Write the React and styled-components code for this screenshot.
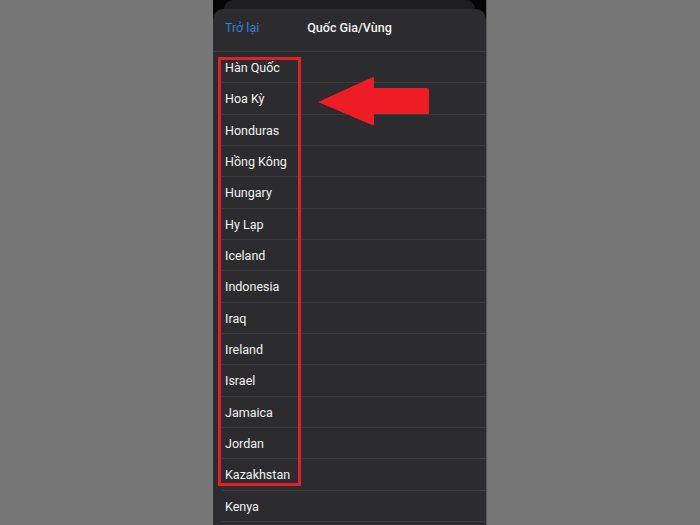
import React from "react";
import styled, { createGlobalStyle } from "styled-components";

const Global = createGlobalStyle`
  html, body { margin: 0; padding: 0; background: #777777; }
  body { font-family: Roboto, "Liberation Sans", Arial, sans-serif; }
`;

const Page = styled.div`
  width: 700px;
  height: 525px;
  display: flex;
  justify-content: center;
  background: #777777;
  overflow: hidden;
`;

const Phone = styled.div`
  position: relative;
  width: 273px;
  height: 525px;
  background: #050505;
  display: flex;
  flex-direction: column;
  overflow: hidden;
  border-right: 1px solid #555;
`;

const BehindCard = styled.div`
  height: 9px;
  margin: 0 11px;
  background: #1e1e20;
  border-radius: 9px 9px 0 0;
  flex-shrink: 0;
`;

const Sheet = styled.div`
  flex: 1;
  background: #2c2c2e;
  border-radius: 10px 10px 0 0;
  display: flex;
  flex-direction: column;
`;

const Header = styled.div`
  height: 43px;
  display: grid;
  grid-template-columns: 1fr auto 1fr;
  align-items: center;
  padding: 0 12px 6px;
  box-sizing: border-box;
  border-bottom: 1px solid #3a3a3d;
`;

const Back = styled.span`
  color: #2f80d6;
  font-size: 12.5px;
`;

const Title = styled.span`
  color: #f2f2f2;
  font-size: 12.5px;
  font-weight: 500;
`;

const List = styled.div`
  display: flex;
  flex-direction: column;
`;

const Row = styled.div`
  height: 31.33px;
  box-sizing: border-box;
  display: flex;
  align-items: center;
  padding-left: 12px;
  color: #f2f2f2;
  font-size: 12.5px;
  position: relative;
  &::after {
    content: "";
    position: absolute;
    left: 9px;
    right: 0;
    bottom: 0;
    height: 1px;
    background: #3a3a3d;
  }
`;

const Highlight = styled.div`
  position: absolute;
  left: 5px;
  top: 57px;
  width: 83px;
  height: 429px;
  box-sizing: border-box;
  border: 3px solid #e3202a;
`;

const Arrow = styled.svg`
  position: absolute;
  left: 104px;
  top: 76px;
`;

const countries = [
  "Hàn Quốc",
  "Hoa Kỳ",
  "Honduras",
  "Hồng Kông",
  "Hungary",
  "Hy Lạp",
  "Iceland",
  "Indonesia",
  "Iraq",
  "Ireland",
  "Israel",
  "Jamaica",
  "Jordan",
  "Kazakhstan",
  "Kenya",
];

export default function App() {
  return (
    <Page>
      <Global />
      <Phone>
        <BehindCard />
        <Sheet>
          <Header>
            <Back>Trở lại</Back>
            <Title>Quốc Gia/Vùng</Title>
            <span />
          </Header>
          <List>
            {countries.map((c) => (
              <Row key={c}>{c}</Row>
            ))}
          </List>
        </Sheet>
        <Highlight />
        <Arrow width="112" height="52" viewBox="0 0 112 52">
          <path
            d="M1 26 L56 1 Q57 1 57 3 L57 12 L110 12 Q112 12 112 14 L112 38 L57 38 L57 48 Q57 50 55 49 Z"
            fill="#ee1c25"
          />
        </Arrow>
      </Phone>
    </Page>
  );
}
